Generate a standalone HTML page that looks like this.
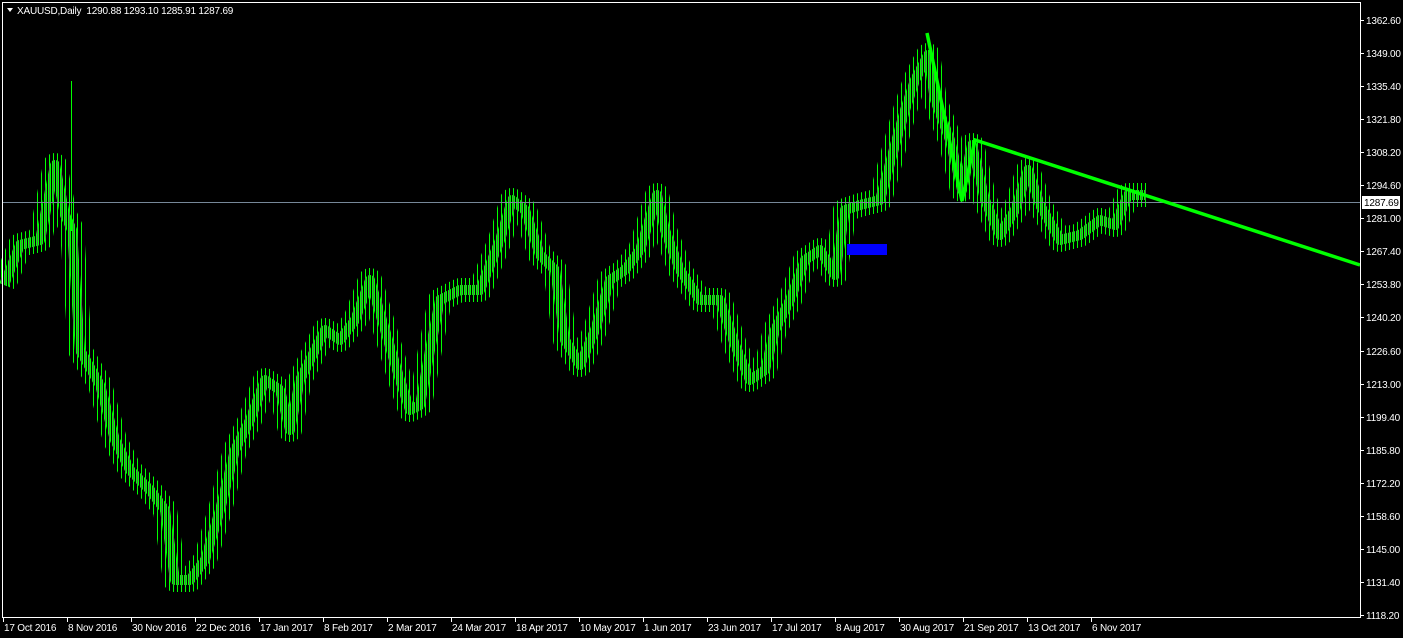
<!DOCTYPE html>
<html><head><meta charset="utf-8">
<style>
html,body{margin:0;padding:0;background:#000;width:1403px;height:638px;overflow:hidden}
svg{display:block}
text{font-family:"Liberation Sans",sans-serif;font-size:10px;fill:#fff;letter-spacing:-0.2px}
</style></head>
<body>
<svg width="1403" height="638" xmlns="http://www.w3.org/2000/svg">
<defs>
<pattern id="p1" x="0" y="0" width="4" height="8" patternUnits="userSpaceOnUse">
<rect x="1" y="0" width="1" height="8" fill="#00ff00"/>
</pattern>
<pattern id="p2" x="0" y="0" width="4" height="8" patternUnits="userSpaceOnUse">
<rect x="0" y="0" width="1" height="8" fill="#00ff00"/>
<rect x="1" y="0" width="1" height="8" fill="#4a7a4a"/>
<rect x="2" y="0" width="1" height="8" fill="#00ff00"/>
</pattern>
</defs>
<rect x="0" y="0" width="1403" height="638" fill="#000"/>
<polyline points="4,285 20,245 40,240 55,165 65,215 72,230 80,350 100,385 115,440 130,470 150,490 165,510 175,580 190,580 205,560 220,510 235,450 250,420 265,380 280,390 290,430 300,380 315,350 325,330 340,340 355,320 370,280 385,330 400,380 410,410 420,405 430,350 440,300 460,290 480,290 500,240 512,200 525,210 540,255 555,270 565,340 580,365 595,330 610,280 625,270 640,250 657,195 665,230 680,270 700,300 720,300 735,345 750,380 765,370 775,330 790,300 805,260 820,250 835,275 845,210 860,205 880,200 895,145 905,110 915,80 928,55 935,100 950,140 962,190 972,145 985,200 1000,235 1015,210 1028,170 1040,205 1060,240 1080,235 1100,220 1115,225 1128,195 1146,195" fill="none" stroke="url(#p1)" stroke-width="24" stroke-linejoin="round"/>
<polyline points="4,285 20,245 40,240 55,165 65,215 72,230 80,350 100,385 115,440 130,470 150,490 165,510 175,580 190,580 205,560 220,510 235,450 250,420 265,380 280,390 290,430 300,380 315,350 325,330 340,340 355,320 370,280 385,330 400,380 410,410 420,405 430,350 440,300 460,290 480,290 500,240 512,200 525,210 540,255 555,270 565,340 580,365 595,330 610,280 625,270 640,250 657,195 665,230 680,270 700,300 720,300 735,345 750,380 765,370 775,330 790,300 805,260 820,250 835,275 845,210 860,205 880,200 895,145 905,110 915,80 928,55 935,100 950,140 962,190 972,145 985,200 1000,235 1015,210 1028,170 1040,205 1060,240 1080,235 1100,220 1115,225 1128,195 1146,195" fill="none" stroke="url(#p2)" stroke-width="10" stroke-linejoin="round"/>
<rect x="71" y="81" width="1" height="150" fill="#00ff00"/>
<line x1="3" y1="202.5" x2="1360" y2="202.5" stroke="#778899" stroke-width="1"/>
<rect x="847" y="244" width="40" height="11" fill="#0000ff"/>
<polyline points="927,33 962,201 975,140 1360,265" fill="none" stroke="#00ff00" stroke-width="3.5"/>
<rect x="2.5" y="2.5" width="1358" height="615" fill="none" stroke="#fff" stroke-width="1"/>
<g stroke="#fff" stroke-width="1">
<path d="M1361 20.5h3M1361 53.5h3M1361 86.5h3M1361 119.5h3M1361 152.5h3M1361 185.5h3M1361 218.5h3M1361 251.5h3M1361 284.5h3M1361 317.5h3M1361 351.5h3M1361 384.5h3M1361 417.5h3M1361 450.5h3M1361 483.5h3M1361 516.5h3M1361 549.5h3M1361 582.5h3M1361 615.5h3"/>
<path d="M3.5 618v4M67.5 618v4M131.5 618v4M195.5 618v4M259.5 618v4M323.5 618v4M387.5 618v4M451.5 618v4M515.5 618v4M579.5 618v4M643.5 618v4M707.5 618v4M771.5 618v4M835.5 618v4M899.5 618v4M963.5 618v4M1027.5 618v4M1091.5 618v4"/>
</g>
<text x="1366" y="24">1362.60</text>
<text x="1366" y="57">1349.00</text>
<text x="1366" y="90">1335.40</text>
<text x="1366" y="123">1321.80</text>
<text x="1366" y="156">1308.20</text>
<text x="1366" y="189">1294.60</text>
<text x="1366" y="222">1281.00</text>
<text x="1366" y="255">1267.40</text>
<text x="1366" y="288">1253.80</text>
<text x="1366" y="321">1240.20</text>
<text x="1366" y="355">1226.60</text>
<text x="1366" y="388">1213.00</text>
<text x="1366" y="421">1199.40</text>
<text x="1366" y="454">1185.80</text>
<text x="1366" y="487">1172.20</text>
<text x="1366" y="520">1158.60</text>
<text x="1366" y="553">1145.00</text>
<text x="1366" y="586">1131.40</text>
<text x="1366" y="619">1118.20</text>
<text x="4" y="631">17 Oct 2016</text>
<text x="68" y="631">8 Nov 2016</text>
<text x="132" y="631">30 Nov 2016</text>
<text x="196" y="631">22 Dec 2016</text>
<text x="260" y="631">17 Jan 2017</text>
<text x="324" y="631">8 Feb 2017</text>
<text x="388" y="631">2 Mar 2017</text>
<text x="452" y="631">24 Mar 2017</text>
<text x="516" y="631">18 Apr 2017</text>
<text x="580" y="631">10 May 2017</text>
<text x="644" y="631">1 Jun 2017</text>
<text x="708" y="631">23 Jun 2017</text>
<text x="772" y="631">17 Jul 2017</text>
<text x="836" y="631">8 Aug 2017</text>
<text x="900" y="631">30 Aug 2017</text>
<text x="964" y="631">21 Sep 2017</text>
<text x="1028" y="631">13 Oct 2017</text>
<text x="1092" y="631">6 Nov 2017</text>
<rect x="1362" y="196" width="38" height="13" fill="#fff"/>
<text x="1364" y="206" style="fill:#000">1287.69</text>
<path d="M7 8 L13 8 L10 12 Z" fill="#fff"/>
<text x="17" y="14">XAUUSD,Daily&#160;&#160;1290.88 1293.10 1285.91 1287.69</text>
</svg>
</body></html>
